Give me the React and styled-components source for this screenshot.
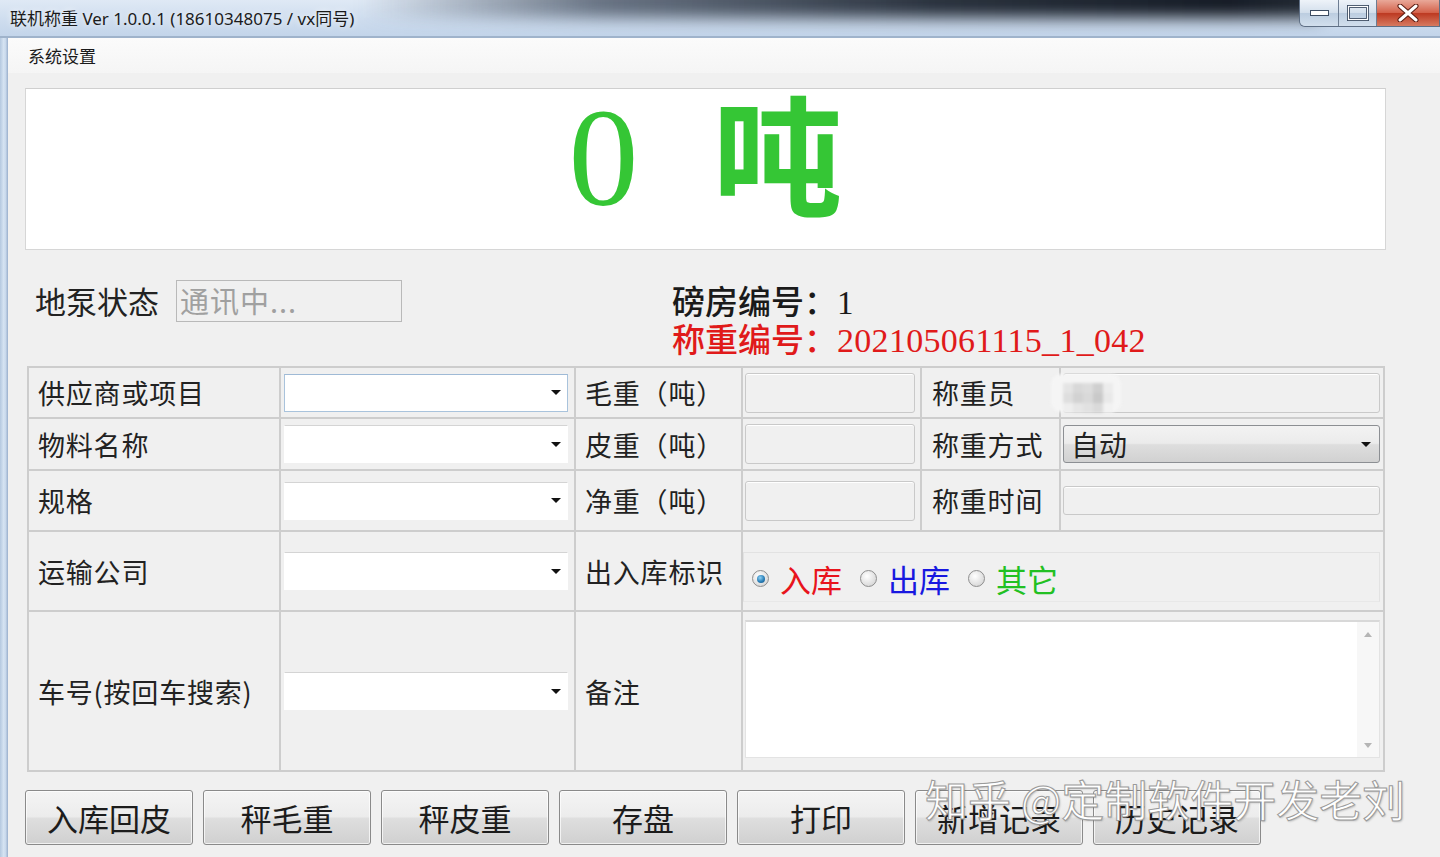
import React from 'react';
import styled, { createGlobalStyle } from 'styled-components';

const GlobalStyle = createGlobalStyle`
  html, body { margin: 0; padding: 0; width: 1440px; height: 857px; overflow: hidden; background: #f0f0f0; }
  * { box-sizing: border-box; }
`;

const CJK = `"Noto Sans CJK SC", "Noto Sans", sans-serif`;
const SERIF = `"Liberation Serif", "Noto Sans CJK SC", serif`;

const Window = styled.div`
  width: 1440px; height: 857px; position: relative; overflow: hidden;
  display: flex; flex-direction: column; background: #f0f0f0; font-family: ${CJK};
`;

const TitleBar = styled.div`
  height: 38px; flex: none; position: relative; display: flex; align-items: flex-start;
  background: linear-gradient(#dfe9f5, #cddcee 60%, #c3d5ea);
  border-bottom: 2px solid #9fb3cb;
  overflow: hidden;
  &::before {
    content: ''; position: absolute; left: 360px; right: 120px; top: -16px; height: 34px;
    background: linear-gradient(to right, rgba(40,52,70,0), rgba(40,52,70,.65) 25%, rgba(20,28,40,.9) 60%, rgba(12,18,28,.97) 90%, rgba(12,18,28,.9));
    filter: blur(8px);
  }
`;

const TitleText = styled.div`
  position: relative; z-index: 1; margin: 8px 0 0 10px;
  font-family: "Noto Sans", "Noto Sans CJK SC", sans-serif; font-size: 17px; line-height: 22px;
  color: #1b1b1b; text-shadow: 0 0 6px rgba(255,255,255,.9);
`;

const Controls = styled.div`
  position: relative; z-index: 1; margin-left: auto; display: flex; height: 27px;
  border: 1px solid #5f6f85; border-top: none; border-radius: 0 0 0 6px; overflow: hidden;
`;

const CtrlBtn = styled.div`
  width: ${p => p.$w}px; height: 26px; display: flex; align-items: center; justify-content: center;
  border-left: ${p => (p.$first ? 'none' : '1px solid #6d7d92')};
  background: ${p => (p.$close
    ? 'linear-gradient(#e9a899, #d4634c 48%, #bd3a22 52%, #d77a60)'
    : 'linear-gradient(#eef3f9, #d3dfec 48%, #bccde0 52%, #d2dfed)')};
`;

const Body = styled.div`
  flex: 1; display: flex; min-height: 0;
`;

const FrameEdge = styled.div`
  width: 8px; flex: none;
  background: linear-gradient(to right, #b4c8df, #d5e3f2 45%, #c9d9ec 70%, #98aecb);
`;

const Client = styled.div`
  flex: 1; display: flex; flex-direction: column; min-width: 0;
`;

const MenuBar = styled.div`
  height: 35px; flex: none; display: flex; align-items: center; padding-left: 20px;
  background: linear-gradient(#fbfbfb, #f5f5f5);
  font-size: 17px; color: #1a1a1a;
`;

const Main = styled.div`
  flex: 1; padding: 15px 0 0 17px; display: flex; flex-direction: column;
`;

const Display = styled.div`
  width: 1361px; height: 162px; flex: none; background: #fff;
  border: 1px solid #d6d6d6; border-top-color: #cfcfcf;
  display: flex; align-items: center; justify-content: center; padding-bottom: 22px;
  color: #35c635; font-family: ${SERIF};
`;

const BigNum = styled.span`
  font-size: 140px; line-height: 1; font-weight: 400;
`;

const BigUnit = styled.span`
  font-family: ${CJK}; font-weight: 700; font-size: 130px; line-height: 1; margin-left: 74px;
  margin-bottom: 18px;
`;

const StatusRow = styled.div`
  height: 116px; flex: none; display: flex; align-items: flex-start; padding-top: 30px;
`;

const StatusLeft = styled.div`
  width: 647px; display: flex; align-items: center; padding-left: 10px; gap: 17px;
`;

const StatusLabel = styled.div`
  font-size: 31px; color: #222; line-height: 42px;
`;

const StatusBox = styled.div`
  width: 226px; height: 42px; border: 1px solid #b9b9b9; background: #f0f0f0;
  font-size: 29px; color: #a0a0a0; line-height: 38px; padding-left: 3px; letter-spacing: 1px;
`;

const InfoGroup = styled.div`
  padding-top: 5px; font-family: ${SERIF}; font-size: 33px; line-height: 37px;
`;

const InfoLine = styled.div`
  color: ${p => p.$color}; font-weight: 500;
`;

const Digits = styled.span`
  font-size: 34px; letter-spacing: 0.3px;
`;

const Table = styled.div`
  width: 1358px; margin-left: 2px; flex: none;
  display: grid; gap: 2px; padding: 2px; background: #cdcdcd;
  grid-template-columns: 250px 293px 165px 177px 137px 322px;
  grid-template-rows: 49px 50px 59px 78px 158px;
`;

const Cell = styled.div`
  background: #f0f0f0; display: flex; align-items: center; min-width: 0;
  grid-column: ${p => p.$span || 'auto'};
`;

const Label = styled(Cell)`
  padding-left: ${p => p.$pl || 9}px; font-size: 27px; color: #222; letter-spacing: 0.8px;
  white-space: nowrap;
`;

const Combo = styled.div`
  width: 284px; height: 38px; margin-left: 3px; background: #fff; position: relative;
  border: 1px solid ${p => (p.$focus ? '#a9c3dc' : '#fff')};
  border-top-color: ${p => (p.$focus ? '#9fbad6' : '#d4d4d4')};
  display: flex; align-items: center; justify-content: flex-end; padding-right: 6px;
`;

const Arrow = styled.span`
  width: 0; height: 0; border-left: 5px solid transparent; border-right: 5px solid transparent;
  border-top: 5px solid #111;
`;

const Field = styled.div`
  width: ${p => p.$w}px; height: ${p => p.$h}px; margin-left: 2px;
  background: #f0f0f0; border: 1px solid #c9c9c9; border-radius: 3px;
  box-shadow: inset 0 1px 0 #fff; display: flex; align-items: center; position: relative;
`;

const Mosaic = styled.div`
  position: absolute; left: -13px; top: 0; width: 70px; height: 38px;
  background: #f5f5f5; border-radius: 10px; filter: blur(1.5px);
  display: grid; grid-template-columns: repeat(5, 10px); grid-template-rows: repeat(3, 10px);
  padding: 9px 0 0 12px; gap: 0;
`;

const MosaicTile = styled.span`
  background: ${p => p.$c};
`;

const SelectBox = styled.div`
  width: 317px; height: 38px; margin-left: 2px; border: 1px solid #8c8f93; border-radius: 3px;
  background: linear-gradient(#f3f3f3, #ebebeb 48%, #dedede 52%, #d1d1d1);
  display: flex; align-items: center; justify-content: space-between; padding: 0 8px 0 7px;
  font-size: 28px; color: #222;
`;

const RadioPanel = styled.div`
  width: 637px; height: 50px; margin: 20px 0 0 0; align-self: flex-start;
  background: #f0f0f0; border: 1px solid #e2e2e2; border-bottom-color: #e8e8e8;
  display: flex; align-items: center; padding-left: 8px; padding-top: 3px;
`;

const RadioItem = styled.div`
  display: flex; align-items: center; margin-right: 18px;
`;

const RadioCircle = styled.span`
  width: 17px; height: 17px; border-radius: 50%; border: 1px solid #8e8e8e;
  background: radial-gradient(circle at 40% 35%, #ffffff, #dcdcdc 70%, #c8c8c8);
  display: flex; align-items: center; justify-content: center; margin-right: 11px;
  &::after {
    content: ''; width: 8px; height: 8px; border-radius: 50%;
    background: ${p => (p.$checked ? 'radial-gradient(circle at 40% 35%, #8fd2f5, #2a7fb8 55%, #154f7d)' : 'transparent')};
  }
`;

const RadioText = styled.span`
  font-size: 31px; color: ${p => p.$color}; line-height: 36px;
`;

const Memo = styled.div`
  width: 635px; height: 138px; margin: 8px 0 0 2px; align-self: flex-start;
  background: #fff; border: 1px solid #e3e3e3; border-top: 2px solid #d8d8d8;
  display: flex; justify-content: flex-end;
`;

const ScrollBar = styled.div`
  width: 22px; background: #f7f7f7; display: flex; flex-direction: column;
  justify-content: space-between; align-items: center; padding: 10px 0 9px;
`;

const ScrollArrow = styled.span`
  width: 0; height: 0; border-left: 4px solid transparent; border-right: 4px solid transparent;
  ${p => (p.$up ? 'border-bottom: 5px solid #b5b5b5;' : 'border-top: 5px solid #b5b5b5;')}
`;

const ButtonRow = styled.div`
  display: flex; gap: 10px; margin-top: 18px;
`;

const Button = styled.div`
  width: 168px; height: 55px; border: 1px solid #8a8a8a; border-radius: 3px;
  background: linear-gradient(#f4f4f4, #ececec 48%, #dedede 52%, #d0d0d0);
  box-shadow: inset 0 0 0 1px rgba(255,255,255,.7);
  display: flex; align-items: center; justify-content: center;
  font-size: 31px; color: #1c1c1c;
`;

const Watermark = styled.div`
  position: absolute; left: 925px; top: 772px; z-index: 5;
  font-family: ${CJK}; font-size: 43px; line-height: 52px; color: #fff; white-space: nowrap;
  -webkit-text-stroke: 1px #9a9a9a;
  text-shadow: 1px 1px 2px rgba(0,0,0,.25);
`;

const comboRows = [
  { label: '供应商或项目', focus: true },
  { label: '物料名称' },
  { label: '规格' },
];

const mosaicColors = ['#e4e4e4', '#d8d8d8', '#dcdcdc', '#cfcfcf', '#ececec',
  '#dedede', '#d2d2d2', '#d9d9d9', '#c9c9c9', '#e9e9e9',
  '#eeeeee', '#e6e6e6', '#e1e1e1', '#dadada', '#f2f2f2'];

export default function App() {
  return (
    <Window>
      <GlobalStyle />
      <TitleBar>
        <TitleText>联机称重 Ver 1.0.0.1 (18610348075 / vx同号)</TitleText>
        <Controls>
          <CtrlBtn $w={38} $first>
            <svg width="19" height="7" viewBox="0 0 19 7"><rect x="0.5" y="0.5" width="18" height="5" fill="#fff" stroke="#3d4d63" /></svg>
          </CtrlBtn>
          <CtrlBtn $w={38}>
            <svg width="22" height="16" viewBox="0 0 22 16"><rect x="1.5" y="1.5" width="19" height="13" fill="none" stroke="#3d4d63" strokeWidth="3" /><rect x="1.5" y="1.5" width="19" height="13" fill="none" stroke="#fff" strokeWidth="1.2" /></svg>
          </CtrlBtn>
          <CtrlBtn $w={63} $close>
            <svg width="22" height="18" viewBox="0 0 22 18"><path d="M3 2 L19 16 M19 2 L3 16" stroke="#5a1b10" strokeWidth="5" strokeLinecap="round" /><path d="M3 2 L19 16 M19 2 L3 16" stroke="#fff" strokeWidth="3" strokeLinecap="round" /></svg>
          </CtrlBtn>
        </Controls>
      </TitleBar>
      <Body>
        <FrameEdge />
        <Client>
          <MenuBar>系统设置</MenuBar>
          <Main>
            <Display>
              <BigNum>0</BigNum>
              <BigUnit>吨</BigUnit>
            </Display>
            <StatusRow>
              <StatusLeft>
                <StatusLabel>地泵状态</StatusLabel>
                <StatusBox>通讯中...</StatusBox>
              </StatusLeft>
              <InfoGroup>
                <InfoLine $color="#1a1a1a">磅房编号：1</InfoLine>
                <InfoLine $color="#e01a1a">称重编号：<Digits>202105061115_1_042</Digits></InfoLine>
              </InfoGroup>
            </StatusRow>
            <Table>
              <Label>{comboRows[0].label}</Label>
              <Cell><Combo $focus><Arrow /></Combo></Cell>
              <Label>毛重（吨）</Label>
              <Cell><Field $w={170} $h={40} /></Cell>
              <Label $pl={10}>称重员</Label>
              <Cell>
                <Field $w={317} $h={40}>
                  <Mosaic>
                    {mosaicColors.map((c, i) => <MosaicTile key={i} $c={c} />)}
                  </Mosaic>
                </Field>
              </Cell>

              <Label>{comboRows[1].label}</Label>
              <Cell><Combo><Arrow /></Combo></Cell>
              <Label>皮重（吨）</Label>
              <Cell><Field $w={170} $h={40} /></Cell>
              <Label $pl={10}>称重方式</Label>
              <Cell><SelectBox>自动<Arrow /></SelectBox></Cell>

              <Label>{comboRows[2].label}</Label>
              <Cell><Combo><Arrow /></Combo></Cell>
              <Label>净重（吨）</Label>
              <Cell><Field $w={170} $h={40} /></Cell>
              <Label $pl={10}>称重时间</Label>
              <Cell><Field $w={317} $h={29} /></Cell>

              <Label>运输公司</Label>
              <Cell><Combo><Arrow /></Combo></Cell>
              <Label>出入库标识</Label>
              <Cell $span="span 3">
                <RadioPanel>
                  <RadioItem><RadioCircle $checked /><RadioText $color="#e8141c">入库</RadioText></RadioItem>
                  <RadioItem><RadioCircle /><RadioText $color="#1818e0">出库</RadioText></RadioItem>
                  <RadioItem><RadioCircle /><RadioText $color="#22c022">其它</RadioText></RadioItem>
                </RadioPanel>
              </Cell>

              <Label>车号(按回车搜索)</Label>
              <Cell><Combo><Arrow /></Combo></Cell>
              <Label>备注</Label>
              <Cell $span="span 3">
                <Memo>
                  <ScrollBar><ScrollArrow $up /><ScrollArrow /></ScrollBar>
                </Memo>
              </Cell>
            </Table>
            <ButtonRow>
              {['入库回皮', '秤毛重', '秤皮重', '存盘', '打印', '新增记录', '历史记录'].map(t => (
                <Button key={t}>{t}</Button>
              ))}
            </ButtonRow>
          </Main>
        </Client>
      </Body>
      <Watermark>知乎 @定制软件开发老刘</Watermark>
    </Window>
  );
}
